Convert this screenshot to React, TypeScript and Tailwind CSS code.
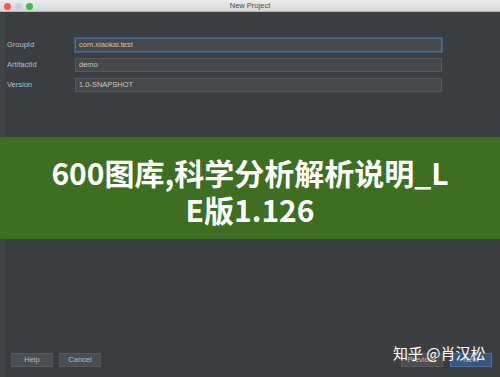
import { ReactNode } from "react";

function Field({ label, value, focused }: { label: string; value: string; focused?: boolean }) {
  return (
    <div className="flex items-center h-[14px]">
      <div className="w-[75px] pl-[7px] text-[7.5px] text-[#b9bcbe]">{label}</div>
      <div
        className={
          "w-[367px] h-[14px] flex items-center pl-[3px] text-[7.5px] text-[#c4c6c8] bg-[#45494a] border " +
          (focused ? "border-[#4a6f96] outline outline-1 outline-[#3d5a7a]" : "border-[#55595b]")
        }
      >
        {value}
      </div>
    </div>
  );
}

function Btn({ children, blue }: { children: ReactNode; blue?: boolean }) {
  return (
    <div
      className={
        "h-[14px] flex items-center justify-center text-[7.5px] border " +
        (blue
          ? "w-[42px] bg-[#365880] border-[#4c6f98] text-[#a7b9d0]"
          : "w-[42px] bg-[#4a4e50] border-[#55595b] text-[#b9bcbe]")
      }
    >
      {children}
    </div>
  );
}

export default function App() {
  return (
    <div
      className="w-[500px] h-[377px] flex flex-col overflow-hidden"
      style={{ fontFamily: '"Liberation Sans", Arial, sans-serif' }}
    >
      {/* title bar */}
      <div className="h-[12px] shrink-0 relative flex items-center justify-center bg-gradient-to-b from-[#ececec] to-[#d6d6d6] border-b border-[#b8b8b8]">
        <div className="absolute left-[4px] top-[3px] flex gap-[4px]">
          <div className="w-[7px] h-[7px] rounded-full bg-[#f25a55]" />
          <div className="w-[7px] h-[7px] rounded-full bg-[#cfcfcf]" />
          <div className="w-[7px] h-[7px] rounded-full bg-[#3fbd44]" />
        </div>
        <span className="text-[7.5px] text-[#4a4a4a]">New Project</span>
      </div>

      {/* body */}
      <div className="flex-1 relative flex flex-col bg-[#3c3f41] border-l-[5px] border-[#414446]">
        <div className="flex flex-col gap-[6px] pt-[26px] -ml-[5px]">
          <Field label="GroupId" value="com.xiaokai.test" focused />
          <Field label="ArtifactId" value="demo" />
          <Field label="Version" value="1.0-SNAPSHOT" />
        </div>

        <div
          className="mt-[45px] -ml-[5px] h-[102px] bg-[#3d6e22] flex flex-col items-center justify-center text-white font-bold text-[30px] leading-[37px] pt-[5px]"
          style={{ fontFamily: '"Noto Sans CJK SC", "Noto Sans", sans-serif' }}
        >
          <span>600图库,科学分析解析说明_L</span>
          <span>E版1.126</span>
        </div>

        <div className="mt-auto mb-[10px] flex items-center justify-between -ml-[5px] pl-[11px] pr-[8px]">
          <div className="flex gap-[6px]">
            <Btn>Help</Btn>
            <Btn>Cancel</Btn>
          </div>
          <div className="flex gap-[7px]">
            <Btn>Previous</Btn>
            <Btn blue>Next</Btn>
          </div>
        </div>

        {/* watermark */}
        <div
          className="absolute left-[388px] top-[333px] text-[15px] text-white leading-none"
          style={{ fontFamily: '"Noto Sans CJK SC", sans-serif' }}
        >
          知乎 @肖汉松
        </div>
      </div>
    </div>
  );
}
